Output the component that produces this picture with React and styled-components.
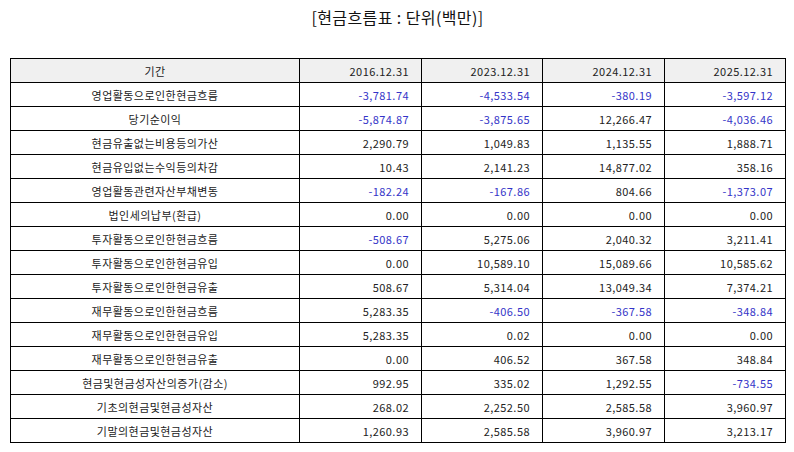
import styled, { createGlobalStyle } from "styled-components";

const GlobalStyle = createGlobalStyle`
  body {
    margin: 0;
    background: #fff;
    font-family: "Noto Sans CJK KR", "Noto Sans", sans-serif;
    color: #222;
  }
`;

const Container = styled.div`
  padding: 0 9px 0 10px;
`;

const Title = styled.h1`
  margin: 0;
  height: 58px;
  padding-top: 5px;
  box-sizing: border-box;
  text-align: center;
  font-size: 16px;
  font-weight: 400;
  letter-spacing: 0.4px;
  color: #111;
`;

const Table = styled.table`
  width: 775px;
  border-collapse: collapse;
  table-layout: fixed;
  font-size: 11px;
  letter-spacing: 0.45px;
`;

const Col = styled.col`
  width: ${(p) => p.$w}px;
`;

const Th = styled.th`
  height: 23px;
  padding: 0 12px;
  border: 1px solid #000;
  background: #f0f0f0;
  font-weight: 400;
  text-align: ${(p) => (p.$label ? "center" : "right")};
`;

const Td = styled.td`
  height: 23px;
  padding: 0 12px;
  border: 1px solid #000;
  text-align: ${(p) => (p.$label ? "center" : "right")};
  color: ${(p) => (p.$neg ? "#3434c8" : "#222")};
`;

const widths = [289, 122, 121, 122, 121];

const periods = ["2016.12.31", "2023.12.31", "2024.12.31", "2025.12.31"];

const rows = [
  ["영업활동으로인한현금흐름", "-3,781.74", "-4,533.54", "-380.19", "-3,597.12"],
  ["당기순이익", "-5,874.87", "-3,875.65", "12,266.47", "-4,036.46"],
  ["현금유출없는비용등의가산", "2,290.79", "1,049.83", "1,135.55", "1,888.71"],
  ["현금유입없는수익등의차감", "10.43", "2,141.23", "14,877.02", "358.16"],
  ["영업활동관련자산부채변동", "-182.24", "-167.86", "804.66", "-1,373.07"],
  ["법인세의납부(환급)", "0.00", "0.00", "0.00", "0.00"],
  ["투자활동으로인한현금흐름", "-508.67", "5,275.06", "2,040.32", "3,211.41"],
  ["투자활동으로인한현금유입", "0.00", "10,589.10", "15,089.66", "10,585.62"],
  ["투자활동으로인한현금유출", "508.67", "5,314.04", "13,049.34", "7,374.21"],
  ["재무활동으로인한현금흐름", "5,283.35", "-406.50", "-367.58", "-348.84"],
  ["재무활동으로인한현금유입", "5,283.35", "0.02", "0.00", "0.00"],
  ["재무활동으로인한현금유출", "0.00", "406.52", "367.58", "348.84"],
  ["현금및현금성자산의증가(감소)", "992.95", "335.02", "1,292.55", "-734.55"],
  ["기초의현금및현금성자산", "268.02", "2,252.50", "2,585.58", "3,960.97"],
  ["기말의현금및현금성자산", "1,260.93", "2,585.58", "3,960.97", "3,213.17"],
];

const App = () => {
  return (
    <Container>
      <GlobalStyle />
      <Title>[현금흐름표 : 단위(백만)]</Title>
      <Table>
        <colgroup>
          {widths.map((w, i) => (
            <Col key={i} $w={w} />
          ))}
        </colgroup>
        <thead>
          <tr>
            <Th $label>기간</Th>
            {periods.map((p) => (
              <Th key={p}>{p}</Th>
            ))}
          </tr>
        </thead>
        <tbody>
          {rows.map(([label, ...values]) => (
            <tr key={label}>
              <Td $label>{label}</Td>
              {values.map((v, i) => (
                <Td key={i} $neg={v.startsWith("-")}>
                  {v}
                </Td>
              ))}
            </tr>
          ))}
        </tbody>
      </Table>
    </Container>
  );
};

export default App;
